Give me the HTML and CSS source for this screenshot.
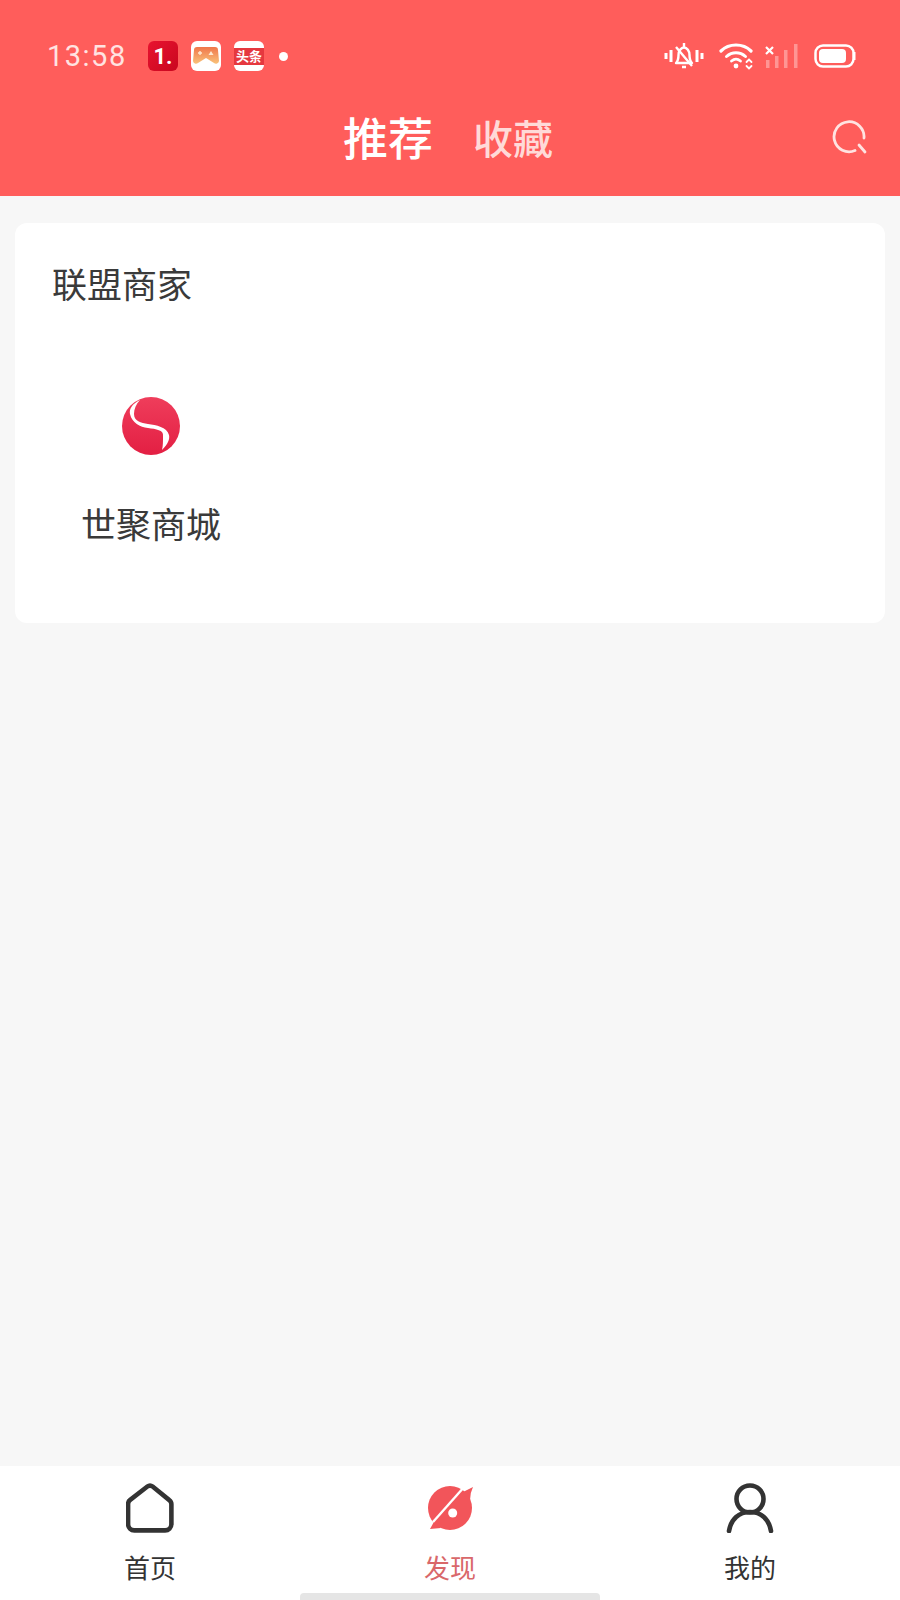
FILE: index.html
```html
<!DOCTYPE html>
<html lang="zh-CN">
<head>
    <meta charset="UTF-8">
    <meta name="viewport" content="width=device-width, initial-scale=1.0">
    <title>发现</title>
    <link rel="stylesheet" href="styles.css">
</head>
<body>
    <div class="app">
        <header class="header">
            <!-- Status bar -->
            <div class="status-bar">
                <span class="time">13:58</span>
                <span class="app-icon app-icon-one">1.</span>
                <span class="app-icon app-icon-game">
                    <svg width="26" height="20" viewBox="0 0 26 20">
                        <defs>
                            <linearGradient id="padFill" x1="0" y1="0" x2="0" y2="1">
                                <stop offset="0" stop-color="#f0764a"/>
                                <stop offset="1" stop-color="#f9c27a"/>
                            </linearGradient>
                        </defs>
                        <path d="M4 1h18a3 3 0 0 1 3 3l1 11a3 3 0 0 1-5 2l-8-5-8 5a3 3 0 0 1-5-2L1 4a3 3 0 0 1 3-3z" fill="url(#padFill)"/>
                        <path d="M7 5v4M5 7h4" stroke="#ffe9d2" stroke-width="1.400"/>
                        <path d="M18 5l2.500 4h-5z" fill="#ffe9d2"/>
                    </svg>
                </span>
                <span class="app-icon app-icon-news"><span class="news-band">头条</span></span>
                <span class="status-dot"></span>

                <div class="status-right">
                    <svg class="icon-bell" width="40" height="28" viewBox="0 0 40 28" fill="none" stroke="#fff">
                        <path d="M2 11v6M7 8v12M33 8v12M38 11v6" stroke-width="3"/>
                        <path d="M12 21c2-2 2.500-4 2.500-8 0-4 2.500-7.500 5.500-7.500S25.500 9 25.500 13c0 4 .5 6 2.500 8z" stroke-width="2.400" stroke-linejoin="round"/>
                        <path d="M20 1v4M18 25h4M12 5l16 19" stroke-width="2.400"/>
                    </svg>
                    <svg class="icon-wifi" width="36" height="28" viewBox="0 0 36 28" fill="none" stroke="#fff" stroke-linecap="round">
                        <path d="M2 9c8-8 22-8 30 0" stroke-width="3.200"/>
                        <path d="M7.500 14.500c5.500-5 13.500-5 19 0" stroke-width="3"/>
                        <path d="M12.500 19c3-2.500 6-2.500 9 0" stroke-width="2.800"/>
                        <circle cx="17" cy="24" r="2.400" fill="#fff" stroke="none"/>
                        <path d="M27.500 20l2.500-2.500 2.500 2.500M27.500 24l2.500 2.500 2.500-2.500" stroke-width="1.800"/>
                    </svg>
                    <svg class="icon-signal" width="34" height="26" viewBox="0 0 34 26" fill="#fff">
                        <rect x="1" y="17" width="3.500" height="8" opacity="0.35"/>
                        <rect x="10" y="13" width="3.500" height="12" opacity="0.35"/>
                        <rect x="19" y="7" width="3.500" height="18" opacity="0.35"/>
                        <rect x="29" y="1" width="3.500" height="24" opacity="0.35"/>
                        <path d="M1 4l7 7M8 4l-7 7" stroke="#fff" stroke-width="2.200" fill="none"/>
                    </svg>
                    <svg class="icon-battery" width="42" height="24" viewBox="0 0 42 24">
                        <rect x="1.500" y="1.500" width="38" height="21" rx="7.500" fill="none" stroke="#fff" stroke-width="2.500"/>
                        <rect x="5" y="5" width="27" height="14" rx="4" fill="#fff"/>
                        <path d="M40.500 8v8" stroke="#fff" stroke-width="2" fill="none"/>
                    </svg>
                </div>
            </div>

            <!-- Title tabs -->
            <nav class="title-row">
                <div class="title-tabs">
                    <span class="title-tab active">推荐</span>
                    <span class="title-tab">收藏</span>
                </div>
                <svg class="icon-search" width="36" height="36" viewBox="0 0 36 36" fill="none" stroke="#ffe3e1" stroke-width="2.800" stroke-linecap="round">
                    <path d="M23 31.500A15 15 0 1 1 32 19"/>
                    <path d="M27 26l6 7"/>
                </svg>
            </nav>
        </header>

        <main class="content">
            <section class="card">
                <h2 class="card-title">联盟商家</h2>
                <div class="shop">
                    <svg class="shop-logo" width="58" height="58" viewBox="0 0 58 58">
                        <defs>
                            <linearGradient id="logoFill" x1="0" y1="0" x2="0" y2="1">
                                <stop offset="0" stop-color="#ef3d5b"/>
                                <stop offset="1" stop-color="#e31f43"/>
                            </linearGradient>
                        </defs>
                        <circle cx="29" cy="29" r="29" fill="url(#logoFill)"/>
                        <path d="M18 3C10 7 7 12 8 17c2 9 10 13 18 14 8 1 16 2 15 8 0 5 0 10-1 14 6-6 8-11 7-15-2-8-13-10-21-11-7-1-14-3-14-10 0-5 2-10 6-14z" fill="#fff"/>
                    </svg>
                    <span class="shop-name">世聚商城</span>
                </div>
            </section>
        </main>

        <!-- Bottom navigation -->
        <footer class="tab-bar">
            <div class="tab">
                <svg width="48" height="50" viewBox="1 1 46 47.500" fill="none" stroke="#333" stroke-width="4.400">
                    <path d="M21.500 4.200a4 4 0 0 1 5 0l16 13a5 5 0 0 1 2 4v19a6 6 0 0 1-6 6H9a6 6 0 0 1-6-6V21a5 5 0 0 1 2-4z"/>
                </svg>
                <span class="tab-label">首页</span>
            </div>
            <div class="tab tab-active">
                <svg width="48" height="50" viewBox="-1 -2 48 50">
                    <circle cx="23" cy="23" r="22" fill="#f2555a"/>
                    <path d="M46 2L34 8l9 7q0-7 3-13zM3 44l5-9 6 8z" fill="#f2555a"/>
                    <path d="M38 1L6 37" stroke="#fff" stroke-width="2.400"/>
                    <circle cx="25.700" cy="28" r="4.500" fill="#fff"/>
                </svg>
                <span class="tab-label">发现</span>
            </div>
            <div class="tab">
                <svg width="48" height="50" viewBox="0 -1 48 50" fill="none" stroke="#333" stroke-width="4.600" stroke-linecap="round">
                    <circle cx="24" cy="15" r="13.500"/>
                    <path d="M3 47c2-12 10-19 21-19s19 7 21 19"/>
                </svg>
                <span class="tab-label">我的</span>
            </div>
            <div class="home-indicator"></div>
        </footer>
    </div>
</body>
</html>
```

FILE: styles.css
```css
body {
    margin: 0;
    padding: 0;
    font-family: Roboto, "Noto Sans CJK SC", sans-serif;
    color: #333;
}

.app {
    display: flex;
    flex-direction: column;
    height: 1600px;
    background: #f7f7f7;
}

.header {
    background: #ff5d5b;
    height: 196px;
    padding-top: 36px;
    box-sizing: border-box;
}

.status-bar {
    display: flex;
    align-items: center;
    height: 40px;
    padding: 0 44px 0 47px;
}

.time {
    width: 101px;
    font-size: 29px;
    letter-spacing: 1.500px;
    color: #ffe3e1;
}

.app-icon {
    display: flex;
    align-items: center;
    justify-content: center;
    width: 30px;
    height: 30px;
    margin-right: 13px;
    border-radius: 6px;
    background: #fff;
    overflow: hidden;
}

.app-icon-one {
    background: linear-gradient(135deg, #e8132f, #c9071f);
    color: #fff;
    font-size: 22px;
    font-weight: 700;
}

.app-icon-news {
    background: #fff;
}

.news-band {
    display: block;
    width: 100%;
    height: 17px;
    background: #e5383f;
    color: #fff;
    font-size: 13px;
    line-height: 17px;
    font-weight: 700;
    text-align: center;
}

.status-dot {
    width: 9px;
    height: 9px;
    margin-left: 2px;
    border-radius: 50%;
    background: #fff;
}

.status-right {
    display: flex;
    align-items: center;
    margin-left: auto;
    gap: 13px;
}

.icon-wifi {
    margin-left: 2px;
}

.icon-signal {
    margin: 0 2px 0 -3px;
}

.title-row {
    display: grid;
    grid-template-columns: 1fr auto 1fr;
    align-items: center;
    height: 60px;
    margin-top: 35px;
    padding: 0 32px 0 28px;
}

.title-tabs {
    grid-column: 2;
    display: flex;
    align-items: center;
    gap: 40px;
}

.title-tab {
    font-size: 40px;
    font-weight: 500;
    line-height: 60px;
    color: #ffdad8;
}

.title-tab.active {
    font-size: 45px;
    color: #fff;
}

.icon-search {
    grid-column: 3;
    justify-self: end;
    margin-top: -8px;
}

.content {
    flex: 1;
    padding: 27px 15px 0;
}

.card {
    height: 400px;
    box-sizing: border-box;
    padding: 43px 37px 0;
    background: #fff;
    border-radius: 12px;
}

.card-title {
    margin: 0;
    font-size: 35px;
    font-weight: 400;
    line-height: 42px;
    color: #3a3a3a;
}

.shop {
    display: flex;
    flex-direction: column;
    align-items: center;
    width: 198px;
    margin-top: 89px;
}

.shop-name {
    margin-top: 51px;
    font-size: 35px;
    line-height: 42px;
    color: #3a3a3a;
}

.tab-bar {
    position: relative;
    display: grid;
    grid-template-columns: repeat(3, 1fr);
    height: 134px;
    box-sizing: border-box;
    padding-top: 17px;
    background: #fff;
}

.tab {
    display: flex;
    flex-direction: column;
    align-items: center;
}

.tab-label {
    margin-top: 18px;
    font-size: 26px;
    line-height: 36px;
    color: #333;
}

.tab-active .tab-label {
    color: #d9686a;
}

.home-indicator {
    position: absolute;
    left: 300px;
    bottom: 0;
    width: 300px;
    height: 7px;
    border-radius: 4px 4px 0 0;
    background: #e5e5e5;
}
```
